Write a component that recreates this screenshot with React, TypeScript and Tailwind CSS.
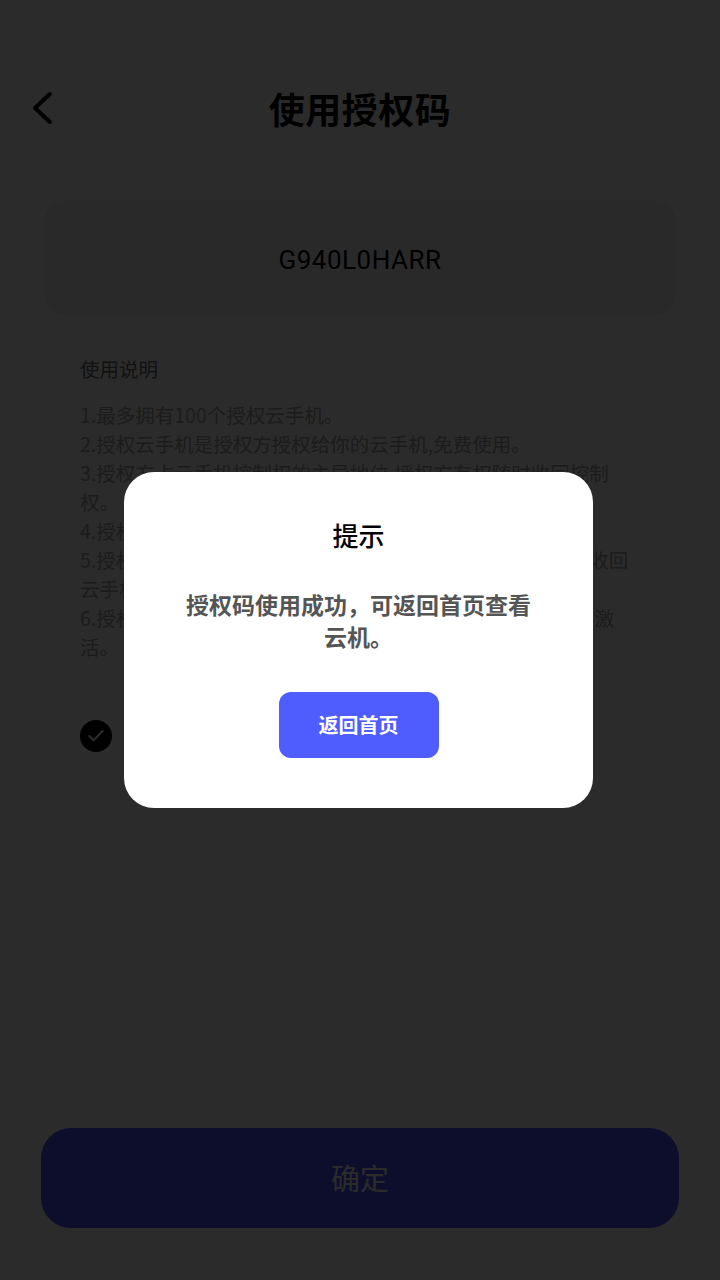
import { Check } from "lucide-react";

const rules = [
  "1.最多拥有100个授权云手机。",
  "2.授权云手机是授权方授权给你的云手机,免费使用。",
  "3.授权方占云手机控制权的主导地位,授权方有权随时收回控制权。",
  "4.授权期间云手机到期后授权自动失效。",
  "5.授权方可随时取消授权,取消后被授权方将无法继续使用并收回云手机。",
  "6.授权码仅可使用一次,使用后授权码即失效,需重新生成后再激活。",
];

export default function App() {
  return (
    <div
      className="relative w-full min-h-screen bg-white overflow-hidden"
      style={{ fontFamily: '"Noto Sans CJK SC", "Noto Sans", sans-serif' }}
    >
      {/* Page */}
      <div className="flex flex-col min-h-screen">
        {/* Header */}
        <div className="relative h-[96px] mt-[60px] flex items-center justify-center">
          <button className="absolute left-[26px] top-[30px] w-[32px] h-[36px] flex items-center justify-center">
            <svg width="24" height="34" viewBox="0 0 24 34" fill="none">
              <path d="M20 3 L5 17 L20 31" stroke="#000" strokeWidth="4" strokeLinecap="round" strokeLinejoin="round" />
            </svg>
          </button>
          <h1 className="text-[36px] font-bold text-black leading-none tracking-[0.5px]">使用授权码</h1>
        </div>

        {/* Code input */}
        <div className="mx-[44px] mt-[44px] h-[115px] rounded-[22px] bg-[#f2f2f2] flex items-center justify-center pt-[6px]">
          <span className="text-[26px] text-black tracking-[0.5px]" style={{ fontFamily: '"Roboto", sans-serif' }}>
            G940L0HARR
          </span>
        </div>

        {/* Instructions */}
        <div className="px-[80px] mt-[40px]">
          <div className="text-[19.5px] text-[#6a6a6a] leading-[28px]">使用说明</div>
          <div className="mt-[17px] text-[19.5px] text-[#a3a3a3] leading-[29px]">
            {rules.map((r) => (
              <p key={r}>{r}</p>
            ))}
          </div>

          <div className="mt-[59px] flex items-center gap-[12px]">
            <div className="w-[32px] h-[32px] rounded-full bg-black flex items-center justify-center">
              <Check size={20} strokeWidth={2.5} color="#fff" />
            </div>
            <span className="text-[18px] text-[#999]">我已阅读并同意相关协议</span>
          </div>
        </div>

        {/* Confirm */}
        <div className="mt-auto px-[41px] pb-[52px]">
          <button className="w-full h-[100px] rounded-[30px] bg-[#4c54fd] text-white text-[29px]">确定</button>
        </div>
      </div>

      {/* Overlay + dialog */}
      <div className="absolute inset-0 bg-[rgba(0,0,0,0.83)] flex items-center justify-center">
        <div className="w-[469px] h-[336px] -ml-[3px] bg-white rounded-[30px] flex flex-col items-center pt-[46px] px-[60px]">
          <div className="text-[26px] font-medium text-black leading-[34px]">提示</div>
          <p className="mt-[36px] text-[23px] font-bold text-[#555] leading-[32px] text-center">
            授权码使用成功，可返回首页查看云机。
          </p>
          <button className="mt-[40px] w-[160px] h-[66px] rounded-[12px] bg-[#4f5dff] text-white text-[20px] font-bold">
            返回首页
          </button>
        </div>
      </div>
    </div>
  );
}
